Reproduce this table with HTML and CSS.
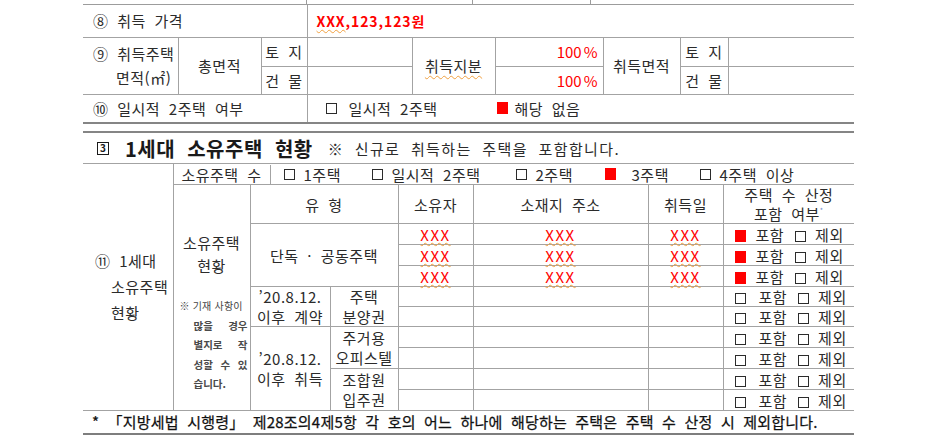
FILE: index.html
```html
<!DOCTYPE html>
<html lang="ko">
<head>
<meta charset="utf-8">
<title>1세대 소유주택 현황</title>
<link rel="stylesheet" href="styles.css">
</head>
<body>
<div class="page">
  <div class="toprow">
    <div class="tc1"></div><div class="tc2"></div><div class="tc3"></div><div class="tc4"></div>
  </div>
  <table class="t1">
    <colgroup>
      <col class="w95"><col class="w83"><col class="w46"><col class="w105"><col class="w83"><col class="w108"><col class="w77"><col class="w48"><col class="w126">
    </colgroup>
    <tr class="h32">
      <td colspan="3" class="lbl">⑧ 취득 가격</td>
      <td colspan="6" class="val"><span class="price"><span class="sq">XXX</span>,123,123원</span></td>
    </tr>
    <tr class="h29">
      <td rowspan="2" class="lbl hang">⑨ 취득주택<br>면적(㎡)</td>
      <td rowspan="2">총면적</td>
      <td>토 지</td>
      <td></td>
      <td rowspan="2"><span class="sqo">취득지분</span></td>
      <td class="pct">100<span class="pc">%</span></td>
      <td rowspan="2">취득면적</td>
      <td>토 지</td>
      <td></td>
    </tr>
    <tr class="h28">
      <td>건 물</td>
      <td></td>
      <td class="pct">100<span class="pc">%</span></td>
      <td>건 물</td>
      <td></td>
    </tr>
    <tr class="h29">
      <td colspan="3" class="lbl">⑩ 일시적 2주택 여부</td>
      <td colspan="6" class="val">
        <div class="opts10">
          <span class="opt o10a"><i class="box"></i><span>일시적 2주택</span></span>
          <span class="opt o10b"><i class="fill"></i><span>해당 없음</span></span>
        </div>
      </td>
    </tr>
  </table>

  <div class="sec">
    <span class="secnum">3</span>
    <span class="sectitle">1세대 소유주택 현황</span>
    <span class="secnote">※ 신규로 취득하는 주택을 포함합니다.</span>
  </div>

  <table class="t2">
    <colgroup>
      <col class="w90"><col class="w77"><col class="w80"><col class="w68"><col class="w75"><col class="w175"><col class="w75"><col class="w131">
    </colgroup>
    <tr class="h21">
      <td rowspan="11" class="lbl2"><span class="hang2">⑪ 1세대<br>소유주택<br>현황</span></td>
      <td colspan="7" class="cnt">
        <div class="cntrow">
          <span class="cntlbl">소유주택 수</span>
          <span class="opt c1"><i class="box"></i><span>1주택</span></span>
          <span class="opt c2"><i class="box"></i><span>일시적 2주택</span></span>
          <span class="opt c3"><i class="box"></i><span>2주택</span></span>
          <span class="opt c4"><i class="fill"></i><span>3주택</span></span>
          <span class="opt c5"><i class="box"></i><span>4주택 이상</span></span>
        </div>
      </td>
    </tr>
    <tr class="h39">
      <td rowspan="10" class="cur">
        <div class="curlbl">소유주택<br>현황</div>
        <div class="note">
          <div class="n0">※ 기재 사항이</div>
          <div class="nl"><span>많을</span><span>경우</span></div>
          <div class="nl"><span>별지로</span><span>작</span></div>
          <div class="nl"><span>성할</span><span>수</span><span>있</span></div>
          <div class="nl nlast"><span>습니다.</span></div>
        </div>
      </td>
      <td colspan="2">유 형</td>
      <td>소유자</td>
      <td>소재지 주소</td>
      <td>취득일</td>
      <td class="hd2">주택 수 산정<br>포함 여부<sup class="ast">*</sup></td>
    </tr>
    <tr class="h21">
      <td colspan="2" rowspan="3">단독 · 공동주택</td>
      <td><span class="xx">XXX</span></td>
      <td><span class="xx">XXX</span></td>
      <td><span class="xx">XXX</span></td>
      <td class="chk"><i class="fill"></i><span class="t1s">포함</span><i class="box b2"></i><span class="t2s">제외</span></td>
    </tr>
    <tr class="h21">
      <td><span class="xx">XXX</span></td>
      <td><span class="xx">XXX</span></td>
      <td><span class="xx">XXX</span></td>
      <td class="chk"><i class="fill"></i><span class="t1s">포함</span><i class="box b2"></i><span class="t2s">제외</span></td>
    </tr>
    <tr class="h21">
      <td><span class="xx">XXX</span></td>
      <td><span class="xx">XXX</span></td>
      <td><span class="xx">XXX</span></td>
      <td class="chk"><i class="fill"></i><span class="t1s">포함</span><i class="box b2"></i><span class="t2s">제외</span></td>
    </tr>
    <tr class="h20">
      <td rowspan="2" class="two">’20.8.12.<br>이후 계약</td>
      <td rowspan="2" class="two">주택<br>분양권</td>
      <td></td><td></td><td></td>
      <td class="chk off"><i class="box"></i><span class="t1s">포함</span><i class="box b2"></i><span class="t2s">제외</span></td>
    </tr>
    <tr class="h20">
      <td></td><td></td><td></td>
      <td class="chk off"><i class="box"></i><span class="t1s">포함</span><i class="box b2"></i><span class="t2s">제외</span></td>
    </tr>
    <tr class="h21">
      <td rowspan="4" class="two">’20.8.12.<br>이후 취득</td>
      <td rowspan="2" class="two">주거용<br>오피스텔</td>
      <td></td><td></td><td></td>
      <td class="chk off"><i class="box"></i><span class="t1s">포함</span><i class="box b2"></i><span class="t2s">제외</span></td>
    </tr>
    <tr class="h21">
      <td></td><td></td><td></td>
      <td class="chk off"><i class="box"></i><span class="t1s">포함</span><i class="box b2"></i><span class="t2s">제외</span></td>
    </tr>
    <tr class="h21">
      <td rowspan="2" class="two">조합원<br>입주권</td>
      <td></td><td></td><td></td>
      <td class="chk off"><i class="box"></i><span class="t1s">포함</span><i class="box b2"></i><span class="t2s">제외</span></td>
    </tr>
    <tr class="h21">
      <td></td><td></td><td></td>
      <td class="chk off"><i class="box"></i><span class="t1s">포함</span><i class="box b2"></i><span class="t2s">제외</span></td>
    </tr>
    <tr class="h22">
      <td colspan="8" class="foot">* 「지방세법 시행령」 제28조의4제5항 각 호의 어느 하나에 해당하는 주택은 주택 수 산정 시 제외합니다.</td>
    </tr>
  </table>
  <div class="endline"></div>
</div>
</body>
</html>
```

FILE: styles.css
```css
* { box-sizing: border-box; }
html, body { margin: 0; padding: 0; background: #fff; }
body {
  font-family: "Noto Sans CJK KR", sans-serif;
  font-size: 15px;
  color: #2b2b2b;
  letter-spacing: 0.5px;
  word-spacing: 4px;
}
.page { width: 771px; margin-left: 83px; }

/* partial row at very top */
.toprow { display: flex; height: 5px; border-bottom: 1px solid #9c9c9c; }
.toprow div { height: 100%; }
.tc1 { width: 224px; border-right: 1px solid #9c9c9c; }
.tc2 { width: 166px; border-right: 1px solid #9c9c9c; }
.tc3 { width: 118px; border-right: 1px solid #9c9c9c; }
.tc4 { flex: 1; }

table { border-collapse: collapse; table-layout: fixed; width: 771px; }
td {
  border: 1px solid #a3a3a3;
  padding: 0;
  text-align: center;
  vertical-align: middle;
  line-height: 17px;
  white-space: nowrap;
}
.t1 { border-top: hidden; border-left: hidden; border-right: hidden; border-bottom: 2px solid #858585; }
.t2 { border-top: 1px solid #8c8c8c; border-left: hidden; border-right: hidden; border-bottom: hidden; }
.endline { height: 2px; background: #7e7e7e; }

.w95 { width: 95px; } .w83 { width: 83px; } .w46 { width: 46px; } .w105 { width: 105px; }
.w108 { width: 108px; } .w77 { width: 77px; } .w48 { width: 48px; } .w126 { width: 126px; }
.w90 { width: 90px; } .w80 { width: 80px; } .w68 { width: 68px; } .w75 { width: 75px; }
.w175 { width: 175px; } .w131 { width: 131px; }

.h32 { height: 32px; } .h29 { height: 29px; } .h28 { height: 28px; }
.h21 { height: 21px; } .h20 { height: 20px; } .h22 { height: 22px; } .h39 { height: 39px; }

.lbl { text-align: left; padding-left: 10px; }
.lbl.hang { padding-left: 33px; text-indent: -23px; white-space: normal; line-height: 24px; }
.val { text-align: left; }
.price { color: #f00; font-weight: bold; font-size: 14px; letter-spacing: 0.9px; word-spacing: 0; padding-left: 9px; }
.sq { text-decoration: underline wavy #f0a040; text-decoration-thickness: 1px; text-underline-offset: 2px; }
.sqo { text-decoration: underline wavy #f0a040; text-decoration-thickness: 1px; text-underline-offset: 3px; }
.pct { text-align: right; padding-right: 5px; color: #f00; letter-spacing: 0; }
.pc { margin-left: 2px; }

/* checkboxes */
.box, .fill { display: inline-block; width: 11px; height: 11px; vertical-align: -1px; }
.box { border: 1px solid #2b2b2b; }
.fill { background: #f00; height: 12px; }
.opt { display: inline-flex; align-items: center; }
.opt span { margin-left: 9px; }

.opts10 { display: flex; padding-left: 18px; }
.o10a { width: 171px; }
.o10a span { margin-left: 12px; }
.o10b span { margin-left: 7px; }

/* section heading */
.sec {
  margin-top: 7px;
  border-top: 2px solid #858585;
  height: 32px;
  display: flex;
  align-items: center;
  padding-left: 14px;
}
.secnum {
  display: inline-flex; align-items: center; justify-content: center;
  width: 12px; height: 13px; border: 1.5px solid #1a1a1a;
  font-size: 10px; font-weight: bold; line-height: 1; letter-spacing: 0; color: #1a1a1a;
}
.sectitle { margin-left: 16px; font-size: 20px; font-weight: bold; color: #1a1a1a; letter-spacing: 0.5px; word-spacing: 6px; }
.secnote { margin-left: 15px; font-size: 15px; letter-spacing: 1.4px; word-spacing: 5px; }

/* section 2 */
.lbl2 { text-align: left; padding-left: 28px; line-height: 26px; }
.hang2 { display: inline-block; text-indent: -16px; white-space: normal; }
.cnt { text-align: left; }
.cntrow { display: flex; align-items: center; height: 19px; }
.cntlbl { width: 97px; border-right: 1px solid #a3a3a3; height: 100%; display: flex; align-items: center; justify-content: center; }
.c1 { margin-left: 13px; width: 88px; }
.c2 { width: 144px; }
.c3 { width: 89px; }
.c4 { width: 95px; }
.c4 span { margin-left: 16px; }

.cur { vertical-align: top; padding-top: 46px; }
.curlbl { line-height: 23px; }
.note { margin-top: 19px; color: #4a4a4a; font-weight: bold; font-size: 10.5px; line-height: 19.5px; letter-spacing: 0; word-spacing: 0; text-align: left; }
.note .n0 { font-size: 10px; margin-left: 6px; font-weight: normal; color: #444; letter-spacing: 0.2px; }
.note .nl { display: flex; justify-content: space-between; margin-left: 20px; width: 54px; }
.note .nlast { justify-content: flex-start; }

.two { line-height: 19.5px; }
.hd2 { line-height: 19px; }
.ast { font-size: 7px; color: #7088c8; vertical-align: 7px; line-height: 0; }

.xx { color: #f00; letter-spacing: 1.5px; text-decoration: underline wavy #f0a040; text-decoration-thickness: 1px; text-underline-offset: 1px; }

.chk { text-align: left; padding-left: 11px; }
.chk .t1s { margin-left: 10px; }
.chk .b2 { margin-left: 11px; }
.chk .t2s { margin-left: 9px; }
.chk.off .t1s { margin-left: 13px; }

.foot { text-align: left; padding-left: 9px; color: #111; letter-spacing: 0.2px; word-spacing: 4px; -webkit-text-stroke: 0.25px #111; }
```
